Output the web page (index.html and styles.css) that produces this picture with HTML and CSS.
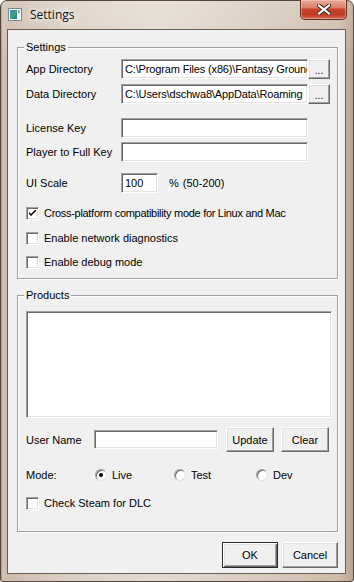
FILE: index.html
```html
<!DOCTYPE html>
<html>
<head>
<meta charset="utf-8">
<link rel="stylesheet" href="styles.css">
</head>
<body>
<div class="window">
  <div class="titlebar">
    <svg class="appicon" width="14" height="13" viewBox="0 0 14 13">
      <defs>
        <linearGradient id="ig" x1="0" y1="0" x2="1" y2="1">
          <stop offset="0" stop-color="#3f86c8"/>
          <stop offset="0.5" stop-color="#3aa47a"/>
          <stop offset="1" stop-color="#2d6f9e"/>
        </linearGradient>
      </defs>
      <rect x="0.5" y="0.5" width="13" height="12" fill="#f4f6f8" stroke="#7d8791"/>
      <rect x="2" y="2" width="7" height="9" fill="url(#ig)"/>
      <rect x="10" y="2" width="2" height="3" fill="#8fa0ae"/>
    </svg>
    <span class="title">Settings</span>
    <div class="close">
      <svg width="14" height="11" viewBox="0 0 14 11">
        <path d="M2 1.5 L12 9.5 M12 1.5 L2 9.5" stroke="#4a2a24" stroke-width="4.2" stroke-linecap="square"/>
        <path d="M2 1.5 L12 9.5 M12 1.5 L2 9.5" stroke="#ffffff" stroke-width="2.2" stroke-linecap="square"/>
      </svg>
    </div>
  </div>

  <div class="client">
    <div class="group g-settings">
      <span class="legend">Settings</span>
      <div class="row r-app">
        <span class="lbl">App Directory</span>
        <div class="tb path"><span class="tbtext">C:\Program Files (x86)\Fantasy Ground</span></div>
        <div class="btn browse">...</div>
      </div>
      <div class="row r-data">
        <span class="lbl">Data Directory</span>
        <div class="tb path"><span class="tbtext">C:\Users\dschwa8\AppData\Roaming</span></div>
        <div class="btn browse">...</div>
      </div>
      <div class="row r-license">
        <span class="lbl">License Key</span>
        <div class="tb path"></div>
      </div>
      <div class="row r-player">
        <span class="lbl">Player to Full Key</span>
        <div class="tb path"></div>
      </div>
      <div class="row r-ui">
        <span class="lbl">UI Scale</span>
        <div class="tb scale">100</div>
        <span class="pct">%</span>
        <span class="range">(50-200)</span>
      </div>
      <div class="row r-cb1">
        <span class="cb"><svg width="7" height="7" viewBox="0 0 7 7"><path d="M0 2 L0 4 L2 6 L7 1 L7 -1 L2 4 Z" fill="#000"/></svg></span>
        <span class="tight">Cross-platform compatibility mode for Linux and Mac</span>
      </div>
      <div class="row r-cb2">
        <span class="cb"></span>
        <span>Enable network diagnostics</span>
      </div>
      <div class="row r-cb3">
        <span class="cb"></span>
        <span>Enable debug mode</span>
      </div>
    </div>

    <div class="group g-products">
      <span class="legend">Products</span>
      <div class="listbox"></div>
      <div class="row r-user">
        <span class="lbl-user">User Name</span>
        <div class="tb user"></div>
        <div class="btn b-update">Update</div>
        <div class="btn b-clear">Clear</div>
      </div>
      <div class="row r-mode">
        <span class="lbl-mode">Mode:</span>
        <span class="ritem r-live"><span class="radio checked"></span>Live</span>
        <span class="ritem r-test"><span class="radio"></span>Test</span>
        <span class="ritem r-dev"><span class="radio"></span>Dev</span>
      </div>
      <div class="row r-steam">
        <span class="cb"></span>
        <span>Check Steam for DLC</span>
      </div>
    </div>

    <div class="footer">
      <div class="btn default b-ok">OK</div>
      <div class="btn b-cancel">Cancel</div>
    </div>
  </div>
</div>
</body>
</html>
```

FILE: styles.css
```css
* { box-sizing: border-box; }
html, body { margin: 0; padding: 0; }
body {
  width: 354px;
  height: 582px;
  overflow: hidden;
  background: #ffffff;
  font-family: "Liberation Sans", Arial, sans-serif;
  font-size: 11px;
  color: #000;
}

.window {
  width: 354px;
  height: 582px;
  border: 1px solid #54463b;
  border-radius: 7px 7px 3px 3px;
  background:
    linear-gradient(180deg, rgba(255,255,255,0.18), rgba(255,255,255,0) 60px),
    linear-gradient(90deg, #a9927c 0, #d7c8ba 2px, #cdbcac 4px, #dcd0c4 20%, #e4dad0 45%, #dacdc0 70%, #cdbcab 96%, #b9a48f 100%);
  padding: 0 7px 7px 6px;
  display: flex;
  flex-direction: column;
}

.titlebar {
  height: 28px;
  flex: none;
  display: flex;
  align-items: flex-start;
}
.appicon { margin: 7px 0 0 1px; flex: none; }
.title {
  margin: 5px 0 0 8px;
  font-family: "Open Sans", "Noto Sans", sans-serif;
  font-size: 12px;
  line-height: 17px;
  color: #111;
  text-shadow: 0 0 6px #fff, 0 0 10px #fff;
}
.close {
  margin: -1px -1px 0 auto;
  width: 47px;
  height: 20px;
  border: 1px solid #5e3026;
  border-top: none;
  border-radius: 0 0 5px 5px;
  background: linear-gradient(180deg, #e9ad9c 0, #dd7d66 40%, #c9442a 50%, #c23a22 75%, #d56a4c 100%);
  box-shadow: inset 0 0 0 1px rgba(255,210,200,0.45);
  display: flex;
  align-items: center;
  justify-content: center;
}

.client {
  flex: 1;
  background: #f0f0f0;
  border: 1px solid #6b5d51;
  padding: 17px 7px 0 9px;
}

.group {
  position: relative;
  border: 1px solid #a0a0a0;
  box-shadow: 1px 1px 0 #fff, inset 1px 1px 0 #fff;
}
.legend {
  position: absolute;
  top: -8px;
  left: 6px;
  padding: 0 2px;
  background: #f0f0f0;
  line-height: 14px;
}
.g-settings { padding: 11px 0 6px 8px; }
.g-products { margin-top: 16px; padding: 15px 5px 18px 8px; }

.row {
  display: flex;
  align-items: center;
  height: 20px;
  white-space: nowrap;
}
.lbl { width: 95px; flex: none; }
.tight { letter-spacing: -0.3px; }

.tb {
  height: 20px;
  background: #fff;
  border: 1px solid;
  border-color: #a0a0a0 #fff #fff #a0a0a0;
  box-shadow: inset 1px 1px 0 #696969, inset -1px -1px 0 #e3e3e3;
  padding: 0 1px 0 3px;
  line-height: 19px;
  white-space: nowrap;
  overflow: hidden;
  flex: none;
}
.tbtext { letter-spacing: -0.15px; }
.path { width: 187px; }
.scale { width: 37px; }
.pct { margin-left: 11px; }
.range { margin-left: 4px; }

.btn {
  flex: none;
  background: #f0f0f0;
  border: 1px solid;
  border-color: #fff #696969 #696969 #fff;
  box-shadow: inset -1px -1px 0 #a0a0a0, inset 1px 1px 0 #e3e3e3;
  display: flex;
  align-items: center;
  justify-content: center;
  white-space: nowrap;
}
.browse { width: 22px; height: 20px; padding-top: 2px; font-size: 10px; }

.r-data { margin-top: 5px; }
.r-license { margin-top: 14px; }
.r-player { margin-top: 4px; }
.r-ui { margin-top: 11px; }
.r-cb1 { margin-top: 10px; }
.r-cb2 { margin-top: 5px; }
.r-cb3 { margin-top: 4px; }

.cb {
  width: 13px;
  height: 13px;
  flex: none;
  margin-right: 5px;
  background: #fff;
  border: 1px solid;
  border-color: #a0a0a0 #fff #fff #a0a0a0;
  box-shadow: inset 1px 1px 0 #696969, inset -1px -1px 0 #e3e3e3;
  display: flex;
  align-items: center;
  justify-content: center;
}

.listbox {
  width: 306px;
  height: 107px;
  background: #fff;
  border: 1px solid;
  border-color: #a0a0a0 #fff #fff #a0a0a0;
  box-shadow: inset 1px 1px 0 #696969, inset -1px -1px 0 #e3e3e3;
}
.r-user { margin-top: 9px; height: 25px; }
.lbl-user { width: 68px; flex: none; }
.user { width: 124px; height: 19px; }
.b-update { width: 48px; height: 25px; margin-left: 8px; }
.b-clear { width: 48px; height: 25px; margin-left: 7px; }

.r-mode { margin-top: 13px; }
.lbl-mode { width: 69px; flex: none; }
.ritem { display: flex; align-items: center; flex: none; }
.r-live { width: 79px; }
.r-test { width: 82px; }
.radio {
  width: 12px;
  height: 12px;
  border-radius: 50%;
  margin-right: 5px;
  flex: none;
  background: radial-gradient(circle at 60% 60%, #ffffff 0 55%, #e8e8e8 100%);
  border: 1px solid #9a9a9a;
  border-right-color: #e0e0e0;
  border-bottom-color: #e0e0e0;
  box-shadow: inset 1px 1px 0 #707070;
  position: relative;
}
.radio.checked::after {
  content: "";
  position: absolute;
  left: 3px;
  top: 3px;
  width: 4px;
  height: 4px;
  border-radius: 50%;
  background: #000;
}
.r-steam { margin-top: 8px; }

.footer {
  display: flex;
  justify-content: flex-end;
  gap: 4px;
  margin-top: 10px;
}
.b-ok, .b-cancel { width: 56px; height: 26px; }
.btn.default {
  border: 1px solid #2b2b2b;
  box-shadow: inset 1px 1px 0 #fff, inset -1px -1px 0 #696969, inset 2px 2px 0 #e3e3e3, inset -2px -2px 0 #a0a0a0;
}
```
